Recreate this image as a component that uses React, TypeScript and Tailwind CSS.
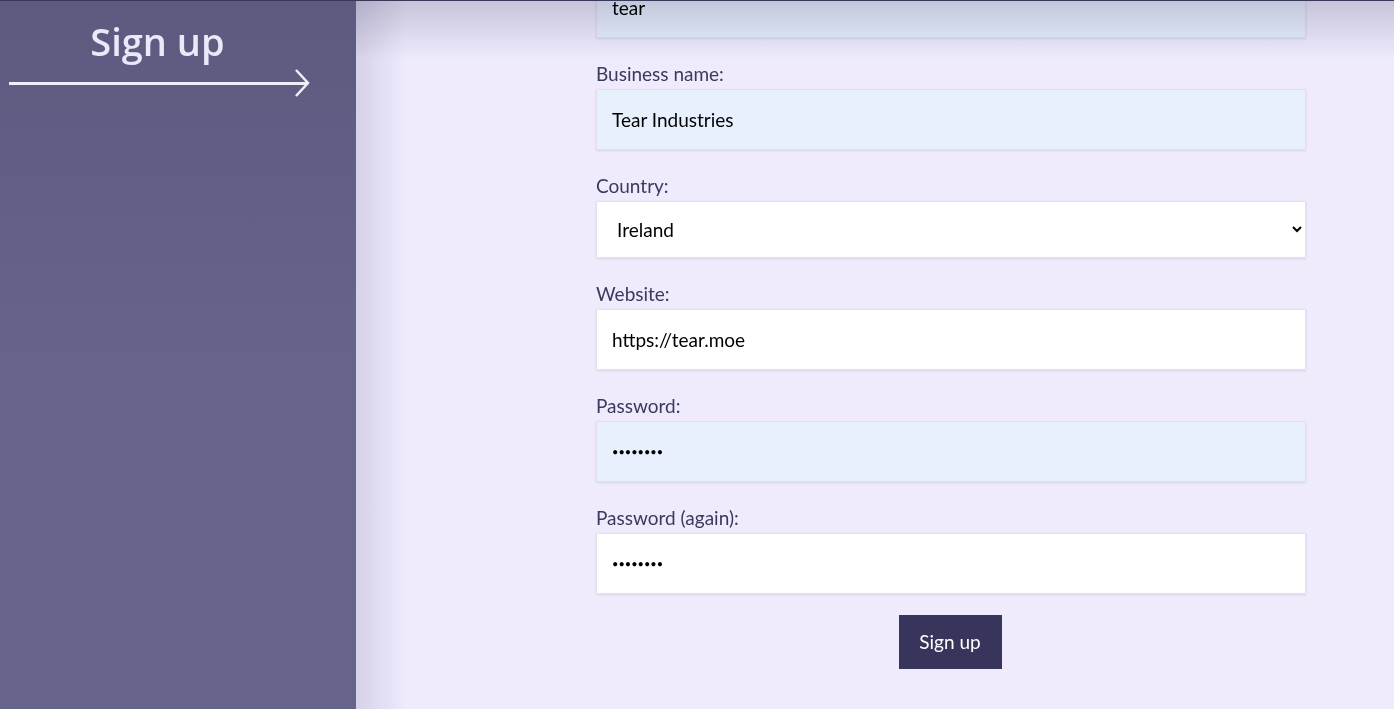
import { useState } from "react";

const fields = [
  { label: "Business name:", value: "Tear Industries", type: "text", autofill: true },
  { label: "Country:", value: "Ireland", type: "select", autofill: false },
  { label: "Website:", value: "https://tear.moe", type: "text", autofill: false },
  { label: "Password:", value: "password", type: "password", autofill: true },
  { label: "Password (again):", value: "password", type: "password", autofill: false },
];

const box =
  "w-full border border-[#e2e0ea] shadow-[0_1px_2px_rgba(60,55,100,0.12)] text-black outline-none";

function Field({ label, value, type, autofill }: (typeof fields)[number]) {
  const [v, setV] = useState(value);
  return (
    <div className="mt-6">
      <label className="block text-[19px] leading-6 mb-[3px] text-[#3a3a5c]">{label}</label>
      {type === "select" ? (
        <select
          value={v}
          onChange={(e) => setV(e.target.value)}
          className={`${box} h-[57px] pl-4 pr-[8px] bg-white text-[19px]`}
        >
          <option>Ireland</option>
          <option>United Kingdom</option>
          <option>France</option>
        </select>
      ) : (
        <input
          type={type}
          value={v}
          onChange={(e) => setV(e.target.value)}
          className={`${box} h-[61px] px-[15px] ${type === "password" ? "text-[11px]" : "text-[19px]"} ${
            autofill ? "bg-[#e8f0fe]" : "bg-white"
          }`}
        />
      )}
    </div>
  );
}

export default function App() {
  return (
    <div className="flex h-[709px] overflow-hidden bg-[#efebfd] font-['Lato',sans-serif] border-t border-[#3a3858]">
      <aside className="w-[356px] shrink-0 bg-gradient-to-b from-[#5d5a80] via-[#67648c] to-[#67648c] pt-[12px] relative z-10">
        <h1 className="text-center text-[38px] leading-[56px] text-[#ece8fa] font-['Open_Sans',sans-serif] font-semibold pr-[41px]">
          Sign up
        </h1>
        <div className="flex items-center pl-[9px] -mt-[1px]">
          <div className="h-[3px] w-[298px] bg-[#f1eefc]" />
          <svg width="16" height="30" viewBox="0 0 16 30" className="-ml-[13px]">
            <path d="M2 2 L14 15 L2 28" fill="none" stroke="#f1eefc" strokeWidth="2.5" />
          </svg>
        </div>
      </aside>
      <main className="relative flex-1">
        <div className="pointer-events-none absolute inset-x-0 top-0 h-[58px] bg-gradient-to-b from-[#d4d5dc] to-white mix-blend-multiply z-10" />
        <div className="pointer-events-none absolute inset-y-0 left-0 w-[50px] bg-gradient-to-r from-[#e4e3ea] to-white mix-blend-multiply z-10" />
        <form className="w-[710px] ml-[240px] -mt-[24px]" onSubmit={(e) => e.preventDefault()}>
          <input
            defaultValue="tear"
            className={`${box} h-[61px] px-[15px] bg-[#e8f0fe] text-[19px]`}
          />
          {fields.map((f) => (
            <Field key={f.label} {...f} />
          ))}
          <div className="flex justify-center mt-[21px] pr-[2px]">
            <button className="h-[54px] w-[103px] bg-[#37355c] text-white text-[19px]">Sign up</button>
          </div>
        </form>
      </main>
    </div>
  );
}
